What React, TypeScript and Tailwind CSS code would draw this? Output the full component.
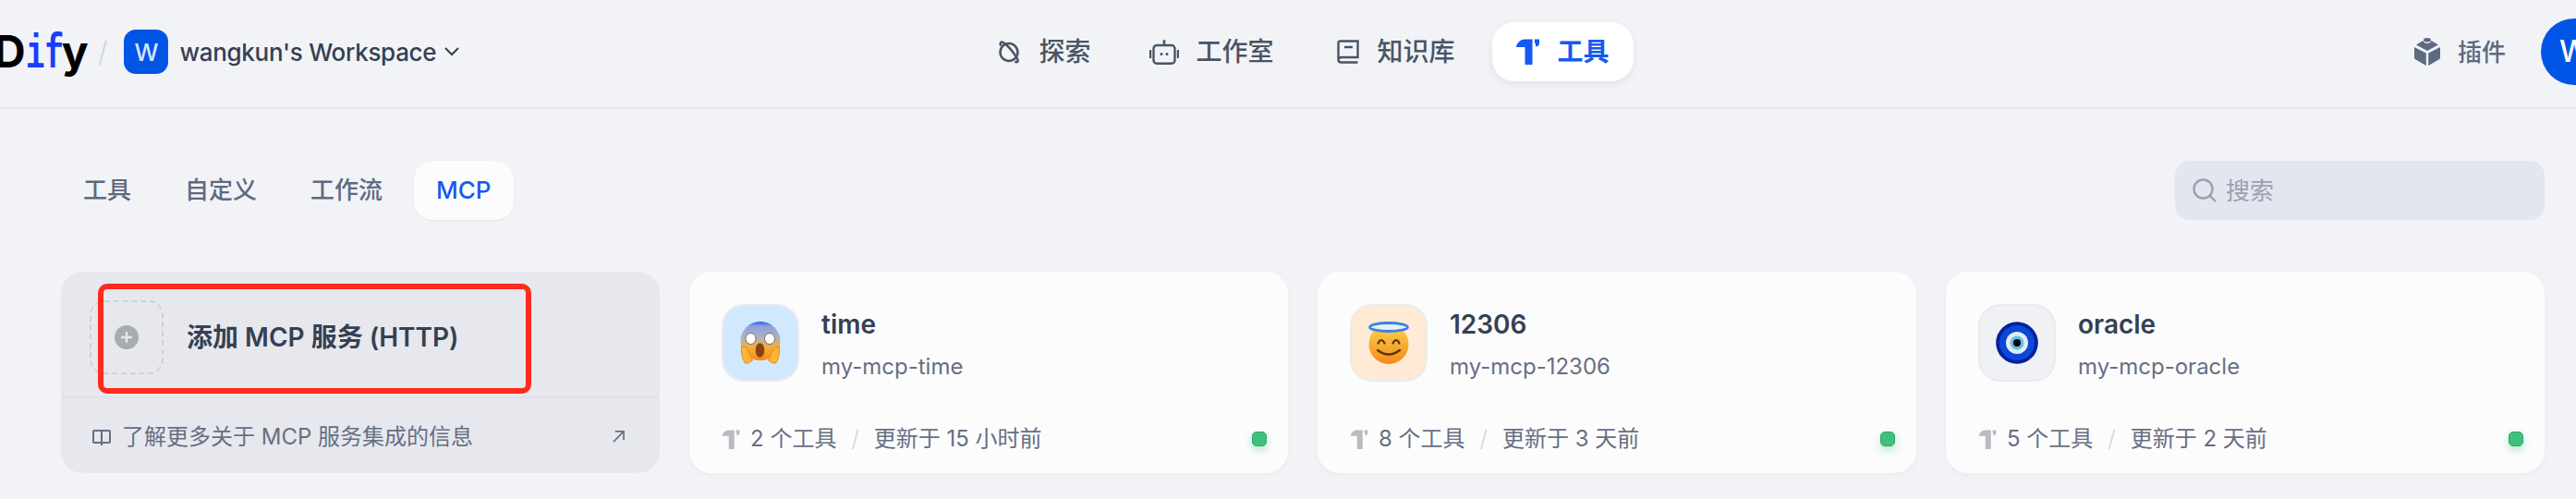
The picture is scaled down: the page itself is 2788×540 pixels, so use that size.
import { ReactNode } from 'react'

const cjk = '[font-family:Inter,"Noto_Sans_CJK_SC",sans-serif]'

function ToolIcon({ className }: { className?: string }) {
  return (
    <svg viewBox="0 0 25 28" className={className} fill="currentColor">
      <path d="M0 8.500 C1 4 5 0.500 9.500 0.500 H17.500 V28 H9.500 V9 H0 Z" />
      <path d="M20 0.500 H25 V5 Q25 8 21 8.500 V5 H20 Z" />
    </svg>
  )
}

function PlanetIcon({ className }: { className?: string }) {
  return (
    <svg viewBox="0 0 24 25" className={className} fill="none" stroke="currentColor" strokeWidth="2.500">
      <circle cx="12" cy="12.500" r="9.500" />
      <path d="M3.500 5.500 C1.500 2.500 3.500 0.800 5.500 1.800 C10 4.500 17 12 21 19.500 C22.800 22.800 20.500 24.200 18.500 22.500" />
    </svg>
  )
}

function RobotIcon({ className }: { className?: string }) {
  return (
    <svg viewBox="0 0 32 27" className={className} fill="none" stroke="currentColor" strokeWidth="2.400">
      <circle cx="16" cy="1.500" r="1.500" fill="currentColor" stroke="none" />
      <path d="M16 2 V6" />
      <rect x="4.500" y="6" width="23" height="19.800" rx="3.500" />
      <path d="M1 11 V20 M31 11 V20" />
      <circle cx="13" cy="15.500" r="1.500" fill="currentColor" stroke="none" />
      <circle cx="19" cy="15.500" r="1.500" fill="currentColor" stroke="none" />
    </svg>
  )
}

function BookIcon({ className }: { className?: string }) {
  return (
    <svg viewBox="0 0 24 26" className={className} fill="none" stroke="currentColor" strokeWidth="2.400">
      <path d="M1.500 21 V3.500 Q1.500 1.500 3.500 1.500 H22.500 V19 H5 Q1.500 19 1.500 22 Q1.500 24.500 5 24.500 H22.500" />
      <path d="M8 8 H17" />
    </svg>
  )
}

function CubeIcon({ className }: { className?: string }) {
  return (
    <svg viewBox="0 0 28 30" className={className} fill="currentColor">
      <path d="M9.500 3 Q10.500 6 14 6 Q17.500 6 18.500 3 L26 7.500 L14 14 L2 7.500 Z" />
      <ellipse cx="14" cy="2.200" rx="4" ry="2.200" />
      <path d="M0 10 L12.800 16.500 V30 L1.500 23.500 Q0 22.500 0 21 Z" />
      <path d="M28 10 L15.200 16.500 V30 L26.500 23.500 Q28 22.500 28 21 Z" />
    </svg>
  )
}

function ScreamEmoji() {
  return (
    <svg viewBox="0 0 44 46" className="w-[44px] h-[46px]">
      <defs>
        <linearGradient id="scream" x1="0" y1="0" x2="0" y2="1">
          <stop offset="0" stopColor="#1f62e8" />
          <stop offset="0.12" stopColor="#8fa3d8" />
          <stop offset="0.4" stopColor="#aab2c6" />
          <stop offset="0.68" stopColor="#f7ae2f" />
          <stop offset="1" stopColor="#f08a1c" />
        </linearGradient>
      </defs>
      <ellipse cx="22" cy="21" rx="21.500" ry="21" fill="url(#scream)" />
      <ellipse cx="11.500" cy="18.500" rx="5.500" ry="6" fill="#fff" stroke="#6d5f52" strokeWidth="0.900" />
      <ellipse cx="32" cy="18.500" rx="5.500" ry="6" fill="#fff" stroke="#6d5f52" strokeWidth="0.900" />
      <ellipse cx="21.500" cy="31" rx="4.800" ry="7.800" fill="#8a4310" />
      <path d="M1.500 27 Q7 26 9.500 33 L13.500 42 Q9 46 5.500 45 Q0.500 38 1.500 27 Z" fill="#fbb530" stroke="#d9822b" strokeWidth="0.900" />
      <path d="M42.500 27 Q37 26 34.500 33 L30.500 42 Q35 46 38.500 45 Q43.500 38 42.500 27 Z" fill="#fbb530" stroke="#d9822b" strokeWidth="0.900" />
    </svg>
  )
}

function HaloEmoji() {
  return (
    <svg viewBox="0 0 44 46" className="w-[44px] h-[46px]">
      <defs>
        <linearGradient id="halo" x1="0" y1="0" x2="0" y2="1">
          <stop offset="0" stopColor="#fcd34d" />
          <stop offset="1" stopColor="#f28a1c" />
        </linearGradient>
      </defs>
      <circle cx="22" cy="24.500" r="21.500" fill="url(#halo)" />
      <ellipse cx="22" cy="6" rx="20.500" ry="4.500" fill="#e9f0ee" stroke="#3f7fe8" strokeWidth="2.800" />
      <path d="M10.500 23.500 Q14 16.500 17.500 23.500 M26.500 23.500 Q30 16.500 33.500 23.500" fill="none" stroke="#5a3208" strokeWidth="2.200" strokeLinecap="round" />
      <path d="M10 31 Q22 40 34 31" fill="none" stroke="#5a3208" strokeWidth="2.400" strokeLinecap="round" />
    </svg>
  )
}

function EyeEmoji() {
  return (
    <svg viewBox="0 0 46 46" className="w-[46px] h-[46px]">
      <circle cx="23" cy="23" r="22.800" fill="#07209c" />
      <circle cx="23" cy="23" r="19" fill="#0a48d8" />
      <circle cx="23" cy="23" r="12" fill="#e3ecf5" />
      <circle cx="23" cy="23" r="7.500" fill="#5fc3e6" />
      <circle cx="23" cy="23" r="4" fill="#000" />
    </svg>
  )
}

function Divider() {
  return <span className="text-[#d0d5dd] text-[24px] mx-[16px] font-light">/</span>
}

function McpCard({ name, id, emoji, tile, tools, updated }: { name: string; id: string; emoji: ReactNode; tile: string; tools: string; updated: string }) {
  return (
    <div className="h-[218px] rounded-[24px] bg-[#fcfcfd] shadow-[0_2px_6px_rgba(16,24,40,0.04)] px-[35px] flex flex-col">
      <div className="flex mt-[35px] gap-[24px]">
        <div className={`w-[84px] h-[84px] rounded-[24px] border-2 border-[#e9ebf0] flex items-center justify-center ${tile}`}>
          {emoji}
        </div>
        <div className="flex flex-col">
          <span className="text-[28px] leading-[44px] font-semibold text-[#354052]">{name}</span>
          <span className="text-[24px] leading-[36px] text-[#676f83] mt-[6px]">{id}</span>
        </div>
      </div>
      <div className="flex items-center mt-[42px] text-[24px] leading-[36px] text-[#676f83]">
        <ToolIcon className="w-[20px] h-[21px] text-[#b9bbc0] mr-[11px]" />
        <span>{tools}</span>
        <Divider />
        <span>{updated}</span>
        <span className="ml-auto -mr-[12px] w-[16px] h-[16px] rounded-[5px] bg-[#3fc17d] border border-[#2aa765] shadow-[0_4px_10px_rgba(23,178,106,0.3)]" />
      </div>
    </div>
  )
}

export default function App() {
  return (
    <div className={`w-[2788px] h-[540px] overflow-hidden bg-[#f1f3f7] ${cjk}`}>
      {/* top bar, logo and avatar are cut off by the screenshot */}
      <header className="h-[118px] pb-[4px] border-b-2 border-[#e4e7ec] flex items-center justify-between -ml-[2px] -mr-[34px]">
        <div className="flex items-center w-[814px]">
          <span className="flex items-baseline w-[96px] -ml-[5px] mr-[5px] mt-[6px] text-[48px] leading-none font-bold text-black">
            <span>D</span>
            <span className="inline-block w-[39px] text-[52px] text-[#1c3cff] scale-x-[0.66] origin-left [font-family:'Liberation_Mono',monospace]">if</span>
            <span>y</span>
          </span>
          <span className="text-[#d0d5dd] text-[30px] ml-[12px] font-light">/</span>
          <div className="ml-[18px] w-[48px] h-[48px] rounded-[13px] bg-[#0055e6] text-[#d6e4ff] text-[26px] font-medium flex items-center justify-center">W</div>
          <span className="ml-[12px] text-[26px] tracking-[-0.3px] font-medium text-[#354052]">wangkun's Workspace</span>
          <svg viewBox="0 0 16 10" className="w-[16px] h-[10px] ml-[9px] text-[#354052]" fill="none" stroke="currentColor" strokeWidth="2">
            <path d="M1 1 L8 8 L15 1" />
          </svg>
        </div>
        <nav className="flex items-center text-[28px] font-medium text-[#495464]">
          <div className="flex items-center gap-[20px]">
            <PlanetIcon className="w-[24px] h-[25px]" />
            <span>探索</span>
          </div>
          <div className="flex items-center gap-[18px] ml-[64px]">
            <RobotIcon className="w-[32px] h-[27px]" />
            <span>工作室</span>
          </div>
          <div className="flex items-center gap-[20px] ml-[68px]">
            <BookIcon className="w-[24px] h-[26px]" />
            <span>知识库</span>
          </div>
          <div className="flex items-center gap-[20px] ml-[40px] h-[64px] px-[26px] rounded-[24px] bg-white text-[#155aef] font-semibold shadow-[0_3px_8px_rgba(16,24,40,0.08)]">
            <ToolIcon className="w-[25px] h-[28px]" />
            <span>工具</span>
          </div>
        </nav>
        <div className="flex items-center w-[786px] justify-end">
          <CubeIcon className="w-[28px] h-[30px] text-[#5e6a80]" />
          <span className="ml-[19px] text-[26px] font-medium text-[#5e6a80]">插件</span>
          <div className="ml-[38px] w-[72px] h-[72px] rounded-full bg-[#0055e6] text-white text-[32px] font-medium flex items-center justify-center">W</div>
        </div>
      </header>

      <main className="pl-[66px] pr-[34px]">
        <div className="flex items-center justify-between h-[64px] mt-[56px]">
          <div className="flex items-center gap-[10px] text-[26px] font-medium text-[#5e6a80]">
            <span className="px-[24px] leading-[64px]">工具</span>
            <span className="px-[24px] leading-[64px]">自定义</span>
            <span className="px-[24px] leading-[64px]">工作流</span>
            <span className="px-[24px] leading-[64px] rounded-[20px] bg-[#fcfcfd] text-[#155aef] shadow-[0_1px_3px_rgba(16,24,40,0.06)]">MCP</span>
          </div>
          <div className="w-[400px] h-[64px] rounded-[16px] bg-[#e3e6ee] flex items-center pl-[19px] gap-[10px]">
            <svg viewBox="0 0 26 26" className="w-[26px] h-[26px] text-[#98a2b3]" fill="none" stroke="currentColor" strokeWidth="2.400">
              <circle cx="11.500" cy="11.500" r="10" />
              <path d="M19 19 L25 25" />
            </svg>
            <span className="text-[26px] text-[#98a2b3]">搜索</span>
          </div>
        </div>

        <div className="grid grid-cols-4 gap-[32px] mt-[56px]">
          <div className="relative h-[218px] rounded-[24px] bg-[#e6e8ee] flex flex-col">
            <div className="h-[137px] border-b-2 border-[#dfe1e8] flex items-center pl-[31px]">
              <div className="w-[80px] h-[80px] rounded-[16px] border-2 border-dashed border-[#cfd1d7] flex items-center justify-center mt-[6px]">
                <svg viewBox="0 0 26 26" className="w-[26px] h-[26px]">
                  <circle cx="13" cy="13" r="13" fill="#a9abb2" />
                  <path d="M13 7 V19 M7 13 H19" stroke="#e6e8ee" strokeWidth="2.400" />
                </svg>
              </div>
              <span className="ml-[25px] text-[28px] font-semibold text-[#354052] mt-[6px]">添加 MCP 服务 (HTTP)</span>
            </div>
            <div className="flex-1 flex items-center pl-[34px] pr-[38px] pt-[2px] text-[24px] text-[#676f83]">
              <svg viewBox="0 0 20 20" className="w-[20px] h-[20px] mr-[12px]" fill="none" stroke="currentColor" strokeWidth="2">
                <path d="M10 3 H2 Q1 3 1 4 V15 Q1 16 2 16 H10 M10 3 H18 Q19 3 19 4 V15 Q19 16 18 16 H10 M10 3 V19" />
              </svg>
              <span>了解更多关于 MCP 服务集成的信息</span>
              <svg viewBox="0 0 14 14" className="w-[13px] h-[13px] ml-auto" fill="none" stroke="currentColor" strokeWidth="1.800">
                <path d="M1 13 L13 1 M3 1 H13 V11" />
              </svg>
            </div>
            {/* red annotation box drawn over the card in the screenshot */}
            <div className="absolute left-[40px] top-[13px] w-[469px] h-[119px] rounded-[10px] border-[6px] border-[#ff2a1c]" />
          </div>
          <McpCard name="time" id="my-mcp-time" emoji={<ScreamEmoji />} tile="bg-[#d1e9ff]" tools="2 个工具" updated="更新于 15 小时前" />
          <McpCard name="12306" id="my-mcp-12306" emoji={<HaloEmoji />} tile="bg-[#ffead5]" tools="8 个工具" updated="更新于 3 天前" />
          <McpCard name="oracle" id="my-mcp-oracle" emoji={<EyeEmoji />} tile="bg-[#eff1f5]" tools="5 个工具" updated="更新于 2 天前" />
        </div>
      </main>
    </div>
  )
}
